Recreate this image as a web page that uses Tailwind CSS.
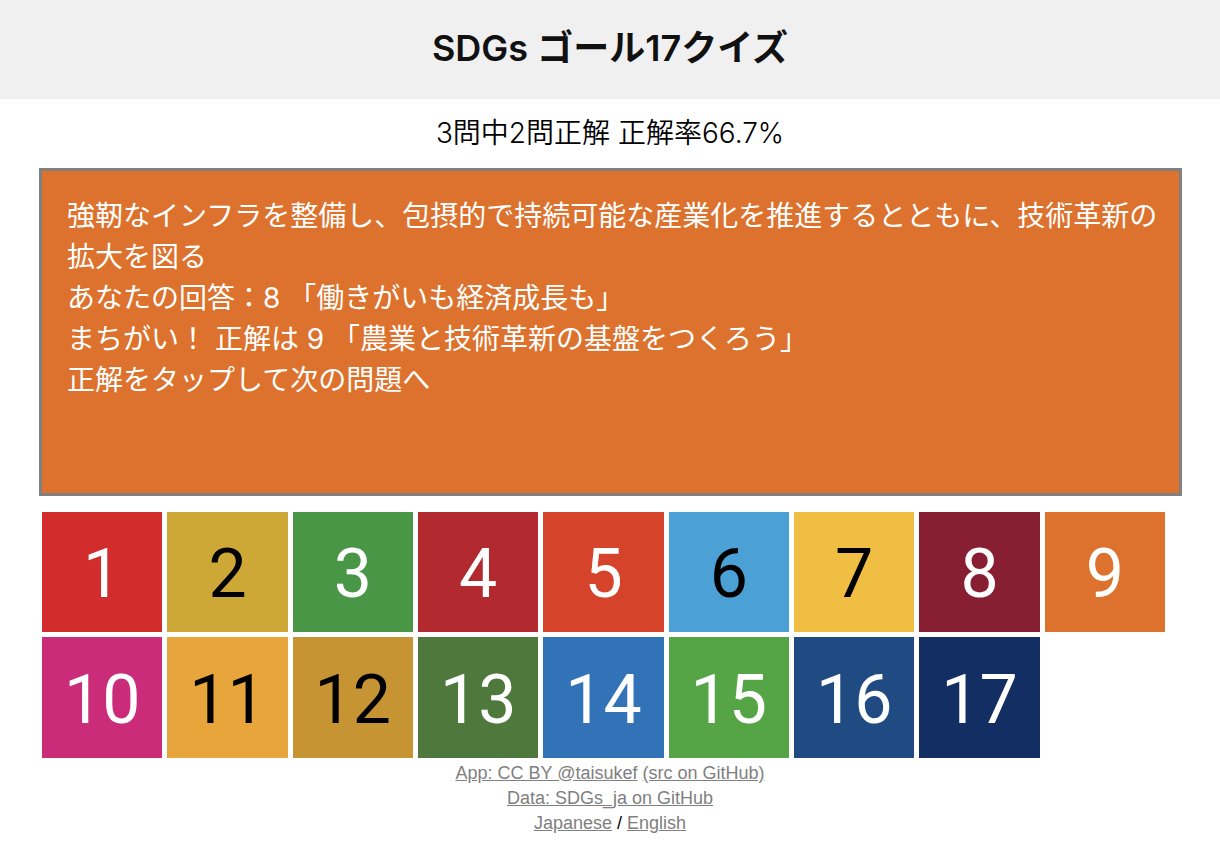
<!DOCTYPE html>
<html lang="ja">
<head>
<meta charset="utf-8">
<meta name="viewport" content="width=device-width, initial-scale=1">
<title>SDGs ゴール17クイズ</title>
<script src="https://cdn.jsdelivr.net/npm/@tailwindcss/browser@4"></script>
</head>
<body class="bg-white text-black font-['Inter','Noto_Sans_CJK_JP',sans-serif]">
<header class="bg-[#f0f0f0] pt-6 pb-[27px] text-center">
  <h1 class="text-[36px] leading-[48px] font-semibold text-[#111]">SDGs ゴール17クイズ</h1>
</header>
<main>
  <p class="pt-[14px] pb-[15px] text-center text-[28px] leading-10 font-[350]">3問中2問正解 正解率66.7%</p>
  <section class="ml-[39px] mr-[38px] min-h-[328px] border-[3px] border-[#808080] bg-[#dc722d] pt-[25px] pb-6 pl-[25px] pr-4 text-[28px] leading-[41px] text-white">
    <p>強靭なインフラを整備し、包摂的で持続可能な産業化を推進するとともに、技術革新の拡大を図る</p>
    <p>あなたの回答：8 「働きがいも経済成長も」</p>
    <p>まちがい！ 正解は 9 「農業と技術革新の基盤をつくろう」</p>
    <p>正解をタップして次の問題へ</p>
  </section>
  <div class="mt-4 grid grid-cols-9 gap-[5px] pl-[42px] pr-[55px] font-['Roboto',sans-serif] text-[68px] leading-none text-white *:pt-1">
    <button type="button" class="aspect-square bg-[#d22d2c]">1</button>
    <button type="button" class="aspect-square bg-[#cea836] text-black">2</button>
    <button type="button" class="aspect-square bg-[#499646]">3</button>
    <button type="button" class="aspect-square bg-[#b32930]">4</button>
    <button type="button" class="aspect-square bg-[#d6432b]">5</button>
    <button type="button" class="aspect-square bg-[#4ba1d6] text-black">6</button>
    <button type="button" class="aspect-square bg-[#f0be42] text-black">7</button>
    <button type="button" class="aspect-square bg-[#881e31]">8</button>
    <button type="button" class="aspect-square bg-[#dc722d]">9</button>
    <button type="button" class="aspect-square bg-[#ca2c79]">10</button>
    <button type="button" class="aspect-square bg-[#e8a53c] text-black">11</button>
    <button type="button" class="aspect-square bg-[#c69432] text-black">12</button>
    <button type="button" class="aspect-square bg-[#4f783d]">13</button>
    <button type="button" class="aspect-square bg-[#3173b6]">14</button>
    <button type="button" class="aspect-square bg-[#55a547]">15</button>
    <button type="button" class="aspect-square bg-[#1f4b82]">16</button>
    <button type="button" class="aspect-square bg-[#122e62]">17</button>
  </div>
</main>
<footer class="pt-[3px] text-center font-['Liberation_Sans',sans-serif] text-[18px] leading-[25px]">
  <div><a href="#app" class="text-[#808080] underline">App: CC BY @taisukef</a> <a href="#src" class="text-[#808080] underline">(src on GitHub)</a></div>
  <div><a href="#data" class="text-[#808080] underline">Data: SDGs_ja on GitHub</a></div>
  <div><a href="#ja" class="text-[#808080] underline">Japanese</a> / <a href="#en" class="text-[#808080] underline">English</a></div>
</footer>
</body>
</html>
